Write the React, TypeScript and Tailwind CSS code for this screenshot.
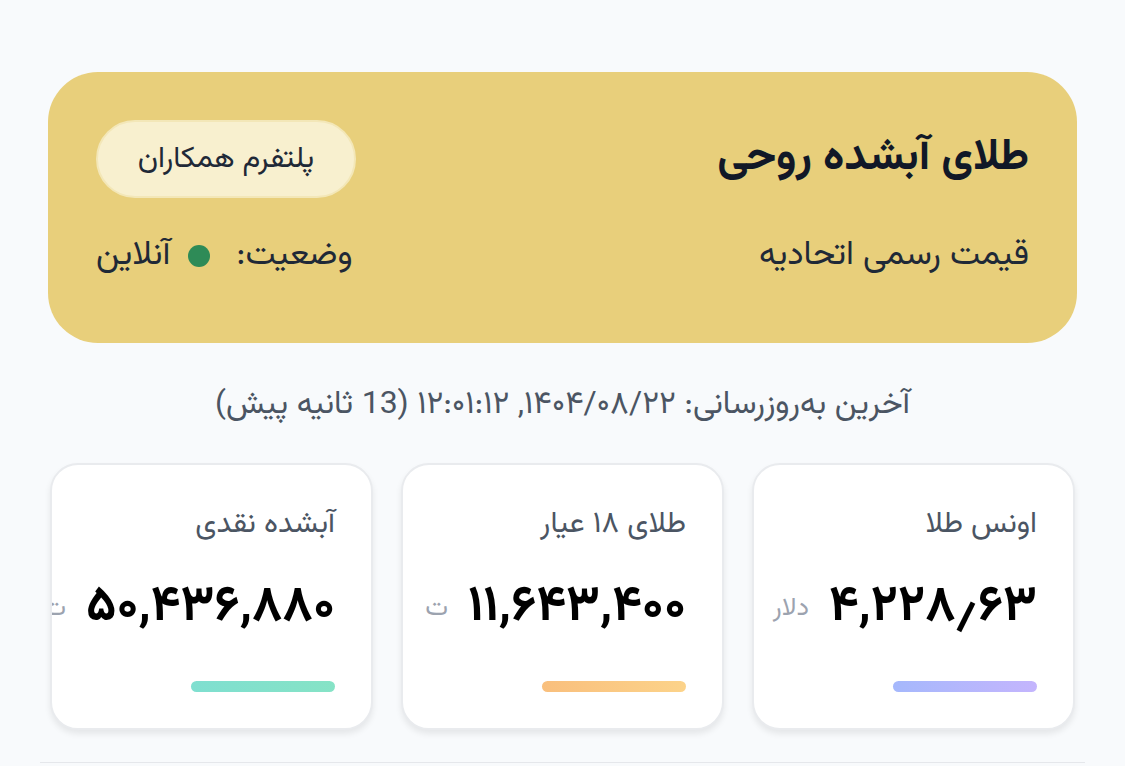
import React from 'react'

const FONT = { fontFamily: "Vazirmatn, 'Noto Sans Arabic', 'DejaVu Sans', sans-serif" }

type Rate = { title: string; value: string; unit: string; bar: string }

const rates: Rate[] = [
  { title: 'اونس طلا', value: '۴,۲۲۸٫۶۳', unit: 'دلار', bar: 'bg-gradient-to-l from-[#c4b5fd] to-[#a5b8fc]' },
  { title: 'طلای ۱۸ عیار', value: '۱۱,۶۴۳,۴۰۰', unit: 'ت', bar: 'bg-gradient-to-l from-[#fcd38a] to-[#f9bf7d]' },
  { title: 'آبشده نقدی', value: '۵۰,۴۳۶,۸۸۰', unit: 'ت', bar: 'bg-gradient-to-l from-[#86e3c6] to-[#7fdfd0]' },
]

function RateCard({ rate }: { rate: Rate }) {
  return (
    <div className="h-[267px] overflow-hidden rounded-[28px] border-2 border-[#e9ebee] bg-white pr-[36px] pt-[38px] shadow-[0_4px_6px_rgba(0,0,0,0.08)]">
      <div className="text-[30px] leading-[44px] text-[#4b5563]">{rate.title}</div>
      <div className="mt-[31px] flex items-center gap-5 whitespace-nowrap">
        <span className="text-[50px] font-bold leading-[60px] text-black">{rate.value}</span>
        <span className="text-[26px] text-[#9ca3af]">{rate.unit}</span>
      </div>
      <div className={`mt-[43px] h-[11px] w-[144px] rounded-full ${rate.bar}`} />
    </div>
  )
}

export default function App() {
  return (
    <div dir="rtl" style={FONT} className="min-h-[766px] bg-[#f8fafc] px-12 pt-[72px]">
      <section className="rounded-[50px] bg-[#e8cf7b] px-12 pb-[65px] pt-12">
        <div className="flex items-center justify-between">
          <h1 className="text-[44px] font-bold leading-[56px] text-[#111827]">طلای آبشده روحی</h1>
          <button className="h-[78px] w-[260px] rounded-full border-2 border-[#f3e7b8] bg-[#f8f0cf] text-[30px] text-[#1f2937]">
            پلتفرم همکاران
          </button>
        </div>
        <div className="mt-[36px] flex items-center justify-between text-[34px] leading-[44px] text-[#1f2937]">
          <span>قیمت رسمی اتحادیه</span>
          <span className="flex items-center">
            <span>وضعیت:</span>
            <span className="mr-[26px] ml-[18px] h-[22px] w-[22px] rounded-full bg-[#2e8b57]" />
            <span>آنلاین</span>
          </span>
        </div>
      </section>

      <p className="mt-[40px] text-center text-[32px] leading-[44px] text-[#4b5563]">
        آخرین به‌روزرسانی: ۱۴۰۴/۰۸/۲۲, ۱۲:۰۱:۱۲ (13 ثانیه پیش)
      </p>

      <div className="mt-[36px] grid grid-cols-3 gap-7 px-[2px]">
        {rates.map((r) => (
          <RateCard key={r.title} rate={r} />
        ))}
      </div>

      <div className="mx-[-8px] mt-[32px] h-px bg-[#e5e7eb]" />
    </div>
  )
}
